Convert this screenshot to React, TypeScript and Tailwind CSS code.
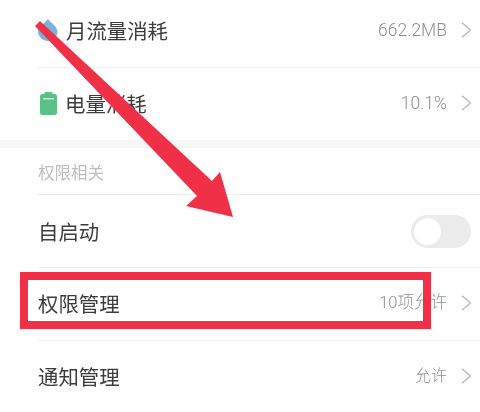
const font = { fontFamily: '"Noto Sans CJK SC", "Noto Sans", sans-serif' };
const valueFont = { fontFamily: 'Roboto, "Noto Sans CJK SC", sans-serif', fontWeight: 300 };

function Chevron() {
  return (
    <svg width="11" height="16" viewBox="0 0 11 16" fill="none" className="ml-[14px] shrink-0">
      <path d="M1 0.8 L9.5 8 L1 15.2" stroke="#b4b4b4" strokeWidth="1.2" />
    </svg>
  );
}

function Row({ label, value, valueSize, height, icon, toggle, last }: { label: string; value?: string; valueSize?: string; height: string; icon?: React.ReactNode; toggle?: boolean; last?: boolean }) {
  return (
    <div className={`ml-[38px] flex items-center pr-[8px] ${height} ${last ? "" : "border-b border-[#f1f1f1]"}`}>
      {icon}
      <span className="text-[20.4px] leading-[28px] text-[#3c3c3c]">{label}</span>
      <div className="flex-1" />
      {value && <span className={`${valueSize} leading-[24px] text-[#8f8f8f]`} style={valueFont}>{value}</span>}
      {value && <Chevron />}
      {toggle && (
        <div className="mr-[1px] flex h-[33px] w-[60px] items-center rounded-full bg-[#ebebeb] pl-[3px]">
          <div className="h-[27px] w-[27px] rounded-full bg-white" />
        </div>
      )}
    </div>
  );
}

export default function App() {
  return (
    <div className="relative h-[412px] w-[480px] overflow-hidden bg-[#fefefe] blur-[0.4px]" style={font}>
      <Row
        label="月流量消耗"
        value="662.2MB"
        valueSize="text-[17.5px]"
        height="h-[68px] pb-[7px]"
        icon={
          <svg width="20" height="23" viewBox="0 0 20 23" className="mr-[8px] shrink-0">
            <path d="M10 0 C13 4 20 8 19.5 13 C19 19 14 22 10 22 C5 22 0 18 0 12 C0 8 7 4 10 0 Z" fill="#7db2d8" />
          </svg>
        }
      />
      <Row
        label="电量消耗"
        value="10.1%"
        valueSize="text-[17.5px]"
        height="h-[72px] pb-[2px]"
        last
        icon={
          <svg width="17" height="23" viewBox="0 0 17 23" className="mr-[8px] ml-[2px] shrink-0">
            <rect x="4.5" y="0" width="8" height="3" rx="1" fill="#5fbd86" />
            <rect x="0" y="2" width="17" height="21" rx="2.5" fill="#5cbf87" />
            <rect x="3" y="6" width="11" height="1.5" fill="#cfeedd" />
          </svg>
        }
      />
      <div className="h-[8px] bg-[#f6f6f6]" />
      <div className="ml-[38px] flex h-[47px] items-center border-b border-[#ededed] pt-[2px] text-[16.5px] text-[#bdbdbd]">权限相关</div>
      <Row label="自启动" height="h-[73px]" toggle />
      <Row label="权限管理" value="10项允许" valueSize="text-[16.5px]" height="h-[73px] pb-[2px]" />
      <Row label="通知管理" value="允许" valueSize="text-[16px]" height="h-[71px] pb-[2px]" last />

      <div className="absolute left-[20px] top-[272px] h-[57px] w-[411px] border-[8px] border-[#f03046]" />
      <svg width="480" height="412" viewBox="0 0 480 412" className="absolute left-0 top-0">
        <polygon points="35,26 40,21 212,181 220,172 233,217 186,206 197,196" fill="#f03046" />
      </svg>
    </div>
  );
}
